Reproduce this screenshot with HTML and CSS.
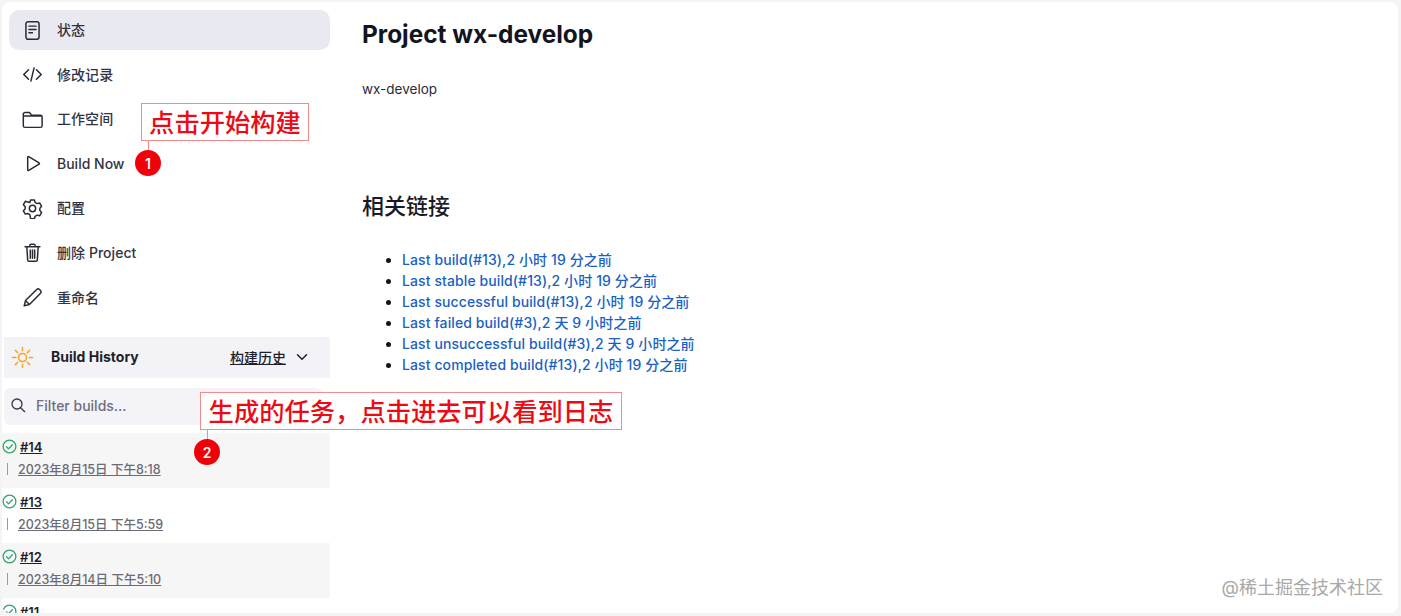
FILE: index.html
```html
<!DOCTYPE html>
<html lang="zh">
<head>
<meta charset="utf-8">
<title>Project wx-develop</title>
<link rel="stylesheet" href="styles.css">
</head>
<body>
<div class="card">
  <aside class="sidebar">
    <nav class="tasks">
      <a class="task active"><svg class="ico" viewBox="0 0 24 24"><rect x="4.500" y="2" width="15" height="20" rx="2.500"/><path d="M8 7h8M8 10.800h8M8 14.500h4"/></svg><span class="zh">状态</span></a>
      <a class="task"><svg class="ico" viewBox="0 0 24 24"><path d="M7.500 6.500 2 12l5.500 5.500M16.500 6.500 22 12l-5.500 5.500M13.800 4.500 10.200 19.500"/></svg><span class="zh">修改记录</span></a>
      <a class="task"><svg class="ico" viewBox="0 0 24 24"><path d="M1.500 7.500V6a2 2 0 0 1 2-2h5l2.500 3h10a2 2 0 0 1 2 2v10a2 2 0 0 1-2 2h-17.500a2 2 0 0 1-2-2z M1.500 8h21"/></svg><span class="zh">工作空间</span></a>
      <a class="task"><svg class="ico" viewBox="0 0 24 24"><path d="M6.500 4.800v14.400a.8.8 0 0 0 1.200.7l11.800-7.200a.8.8 0 0 0 0-1.400L7.700 4.100a.8.8 0 0 0-1.200.7z"/></svg><span>Build Now</span></a>
      <a class="task"><svg class="ico" viewBox="0 0 24 24"><circle cx="12" cy="12" r="3.600"/><path d="M9.800 2.300h4.400l.8 2.800 2.400 1.300 2.800-.7 2.200 3.800-2 2.100v2.800l2 2.100-2.200 3.800-2.800-.7-2.400 1.300-.8 2.800H9.800L9 19l-2.400-1.300-2.800.7-2.200-3.800 2-2.100v-2.800l-2-2.100 2.200-3.800 2.800.7L9 5.100z" stroke-linejoin="round"/></svg><span class="zh">配置</span></a>
      <a class="task"><svg class="ico" viewBox="0 0 24 24"><path d="M3.500 5.500h17M9 5.500V3.800a1.300 1.300 0 0 1 1.300-1.300h3.400A1.300 1.300 0 0 1 15 3.800v1.700M5.500 5.500l1 15a1.600 1.600 0 0 0 1.600 1.500h7.800a1.600 1.600 0 0 0 1.600-1.500l1-15M9.500 9v9.500M12 9v9.500M14.500 9v9.500"/></svg><span class="zh">删除 Project</span></a>
      <a class="task"><svg class="ico" viewBox="0 0 24 24"><path d="M2.500 21.500l1.500-6L16.800 2.800a2.300 2.300 0 0 1 3.200 0l1.200 1.200a2.300 2.300 0 0 1 0 3.200L8.500 20zM4 15.500l4.500 4.500"/></svg><span class="zh">重命名</span></a>
    </nav>
    <section class="history">
      <header class="history-bar">
        <svg class="sun" viewBox="0 0 24 24"><circle cx="12" cy="12" r="4.200"/><path d="M12 1.500v3.500M12 19v3.500M1.500 12H5M19 12h3.500M4.600 4.600l2.400 2.400M17 17l2.400 2.400M4.600 19.400 7 17M17 7l2.400-2.400"/></svg>
        <strong class="history-title">Build History</strong>
        <a class="history-link">构建历史</a>
        <svg class="chev" viewBox="0 0 12 12"><path d="M1.500 3.800 6 8.300l4.500-4.500"/></svg>
      </header>
      <div class="filter">
        <svg class="search" viewBox="0 0 24 24"><circle cx="10.500" cy="10.500" r="7.500"/><path d="M16 16l6 6"/></svg>
        <span>Filter builds...</span>
      </div>
      <ul class="builds">
        <li class="build shaded">
          <div class="build-top"><svg class="ok" viewBox="0 0 16 16"><circle cx="8" cy="8" r="6.800"/><path d="M4.800 8.300l2.200 2.200 4-4.300"/></svg><a class="num">#14</a></div>
          <div class="build-date"><i class="tick"></i><a>2023年8月15日 下午8:18</a></div>
        </li>
        <li class="build">
          <div class="build-top"><svg class="ok" viewBox="0 0 16 16"><circle cx="8" cy="8" r="6.800"/><path d="M4.800 8.300l2.200 2.200 4-4.300"/></svg><a class="num">#13</a></div>
          <div class="build-date"><i class="tick"></i><a>2023年8月15日 下午5:59</a></div>
        </li>
        <li class="build shaded">
          <div class="build-top"><svg class="ok" viewBox="0 0 16 16"><circle cx="8" cy="8" r="6.800"/><path d="M4.800 8.300l2.200 2.200 4-4.300"/></svg><a class="num">#12</a></div>
          <div class="build-date"><i class="tick"></i><a>2023年8月14日 下午5:10</a></div>
        </li>
        <li class="build">
          <div class="build-top"><svg class="ok" viewBox="0 0 16 16"><circle cx="8" cy="8" r="6.800"/><path d="M4.800 8.300l2.200 2.200 4-4.300"/></svg><a class="num">#11</a></div>
        </li>
      </ul>
    </section>
  </aside>
  <main class="main">
    <h1>Project wx-develop</h1>
    <p class="desc">wx-develop</p>
    <h2>相关链接</h2>
    <ul class="links">
      <li><a>Last build(#13),2 小时 19 分之前</a></li>
      <li><a>Last stable build(#13),2 小时 19 分之前</a></li>
      <li><a>Last successful build(#13),2 小时 19 分之前</a></li>
      <li><a>Last failed build(#3),2 天 9 小时之前</a></li>
      <li><a>Last unsuccessful build(#3),2 天 9 小时之前</a></li>
      <li><a>Last completed build(#13),2 小时 19 分之前</a></li>
    </ul>
  </main>
  <div class="note note-one"><span class="note-text">点击开始构建</span><i class="stem"></i><b class="badge">1</b></div>
  <div class="note note-two"><span class="note-text">生成的任务，点击进去可以看到日志</span><i class="stem"></i><b class="badge">2</b></div>
  <div class="watermark">@稀土掘金技术社区</div>
</div>
</body>
</html>
```
FILE: styles.css
```css
* { box-sizing: border-box; }
html, body { margin: 0; height: 100%; overflow: hidden; }
body {
  background: #f4f4f4;
  padding: 2px 3px 3px 2px;
  font-family: Inter, "Noto Sans CJK SC", sans-serif;
  color: #14141f;
}
.card {
  position: relative;
  display: flex;
  height: 611px;
  background: #fff;
  border-radius: 8px;
  overflow: hidden;
}
.sidebar { width: 328px; flex: none; padding-top: 8px; }
.tasks { display: flex; flex-direction: column; padding-left: 7px; }
.task {
  display: flex;
  align-items: center;
  gap: 14px;
  height: 44.600px;
  padding-left: 13px;
  font-size: 14px;
  font-weight: 500;
  color: #33333f;
  border-radius: 10px;
}
.zh { padding-bottom: 2px; letter-spacing: .05px; }
.task.active { height: 40px; margin-bottom: 2.300px; background: #e9e9f1; }
.ico { width: 21px; height: 21px; flex: none; fill: none; stroke: #2a2a36; stroke-width: 1.700; stroke-linecap: round; stroke-linejoin: round; }
.history { margin-top: 17px; }
.history-bar {
  display: flex;
  align-items: center;
  height: 41px;
  margin-left: 2px;
  padding: 0 22px 0 7px;
  background: #f3f3f7;
}
.sun { width: 23px; height: 23px; fill: none; stroke: #f5a623; stroke-width: 1.600; stroke-linecap: round; }
.history-title { margin-left: 17px; padding-bottom: 2px; font-size: 14px; font-weight: 700; color: #1f1f2b; }
.history-link { margin-left: auto; font-size: 14px; font-weight: 500; text-decoration: underline; color: #1f1f2b; }
.chev { width: 12px; height: 12px; margin-left: 10px; fill: none; stroke: #1f1f2b; stroke-width: 1.500; stroke-linecap: round; stroke-linejoin: round; }
.filter {
  display: flex;
  align-items: center;
  gap: 10px;
  height: 37px;
  margin: 10px 8px 0 2px;
  padding: 0 0 2px 6px;
  background: #f3f3f8;
  border-radius: 6px;
  font-size: 14px;
  font-weight: 500;
  color: #6f6f7d;
}
.search { width: 16px; height: 16px; flex: none; fill: none; stroke: #3a3a46; stroke-width: 2; stroke-linecap: round; }
.builds { list-style: none; margin: 8px 0 0; padding: 0; }
.build { height: 55px; padding: 5px 0 0; }
.build.shaded { background: #f6f6f6; }
.build-top { display: flex; align-items: center; gap: 3px; height: 18px; font-size: 13px; font-weight: 600; color: #1f1f2b; }
.ok { width: 15px; height: 15px; flex: none; fill: none; stroke: #30a46c; stroke-width: 1.400; stroke-linecap: round; stroke-linejoin: round; }
.num { text-decoration: underline; }
.build-date { display: flex; align-items: center; height: 18px; margin-top: 4px; padding-left: 5px; font-size: 12.500px; font-weight: 500; color: #6b6b76; }
.build-date a { text-decoration: underline; margin-left: 10px; }
.tick { display: block; width: 1px; height: 12px; background: #9a9aa2; }
.main { flex: 1; padding: 16px 0 0 32px; }
h1 { margin: 0; font-size: 24.400px; line-height: 32px; font-weight: 700; color: #14141f; }
.desc { margin: 29px 0 0; font-size: 13.500px; line-height: 20px; color: #2b2b36; }
h2 { margin: 93px 0 0; font-size: 22px; line-height: 28px; font-weight: 500; color: #1a1a24; }
.links { margin: 29px 0 0; padding-left: 40px; font-size: 14px; line-height: 21px; font-weight: 500; letter-spacing: .1px; }
.links a { color: #1a5fc4; }
.note { position: absolute; }
.note-text {
  display: block;
  border: 1px solid #f08c8c;
  background: #fff;
  color: #ee0a14;
  font-size: 25.300px;
  font-weight: 500;
  line-height: 36px;
  padding-top: 1px;
  height: 38px;
  text-align: center;
  white-space: nowrap;
}
.note-one { left: 139px; top: 101px; width: 168px; }
.note-two { left: 198px; top: 390px; width: 422px; }
.stem { position: absolute; top: 38px; width: 1px; height: 10px; background: #f08c8c; }
.note-one .stem { left: 7px; }
.note-two .stem { left: 7px; }
.badge {
  position: absolute;
  top: 47px;
  display: flex;
  align-items: center;
  justify-content: center;
  width: 26px;
  height: 26px;
  border-radius: 50%;
  background: #f00009;
  color: #fff;
  font-size: 14px;
  font-weight: 600;
}
.note-one .badge { left: -6px; }
.note-two .badge { left: -6px; }
.watermark { position: absolute; right: 15px; bottom: 13px; font-size: 18px; line-height: 24px; color: #a8a8a8; }
```
